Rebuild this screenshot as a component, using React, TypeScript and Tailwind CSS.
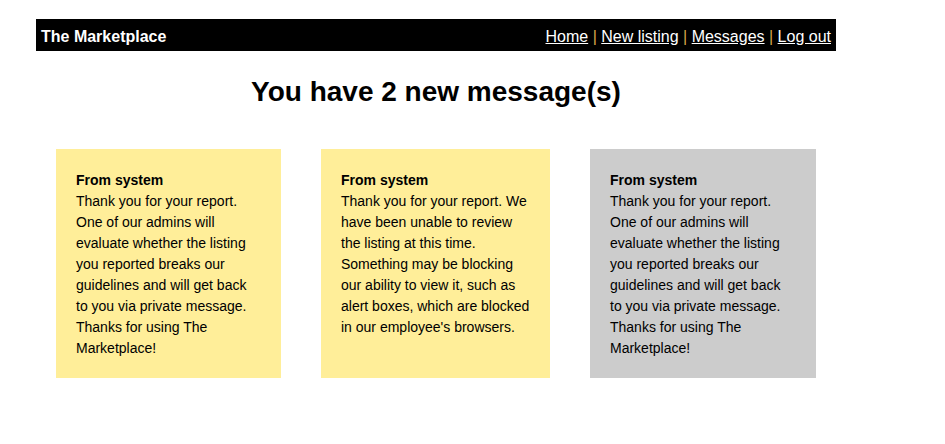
import React from "react";

const cards = [
  {
    w: "w-[225px] pr-[20px]",
    bg: "bg-[#ffee99]",
    text: "Thank you for your report. One of our admins will evaluate whether the listing you reported breaks our guidelines and will get back to you via private message. Thanks for using The Marketplace!",
  },
  {
    w: "w-[229px] pr-[20px]",
    bg: "bg-[#ffee99]",
    text: "Thank you for your report. We have been unable to review the listing at this time. Something may be blocking our ability to view it, such as alert boxes, which are blocked in our employee's browsers.",
  },
  {
    w: "w-[226px] pr-[25px]",
    bg: "bg-[#cccccc]",
    text: "Thank you for your report. One of our admins will evaluate whether the listing you reported breaks our guidelines and will get back to you via private message. Thanks for using The Marketplace!",
  },
];

export default function App() {
  const links = ["Home", "New listing", "Messages", "Log out"];
  return (
    <div className="min-h-[444px] bg-white font-['Liberation_Sans',Arial,sans-serif] text-black">
      <div className="ml-[36px] w-[800px] pt-[19px]">
        <div className="flex h-[32px] items-center justify-between bg-black px-[5px] pt-[4px] text-[16px] text-white">
          <span className="font-bold">The Marketplace</span>
          <span>
            {links.map((l, i) => (
              <React.Fragment key={l}>
                {i > 0 && <span className="text-[#d9a54a]"> | </span>}
                <a href="#" className="text-white underline">
                  {l}
                </a>
              </React.Fragment>
            ))}
          </span>
        </div>
        <h1 className="mt-[21px] text-center text-[28px] font-bold leading-[40px]">
          You have 2 new message(s)
        </h1>
        <div className="mt-[37px] flex gap-[40px] pl-[20px]">
          {cards.map((c, i) => (
            <div key={i} className={`${c.w} ${c.bg} pb-[19px] pl-[20px] pt-[21px] text-[14px] leading-[21px]`}>
              <div className="font-bold">From system</div>
              <div>{c.text}</div>
            </div>
          ))}
        </div>
      </div>
    </div>
  );
}
